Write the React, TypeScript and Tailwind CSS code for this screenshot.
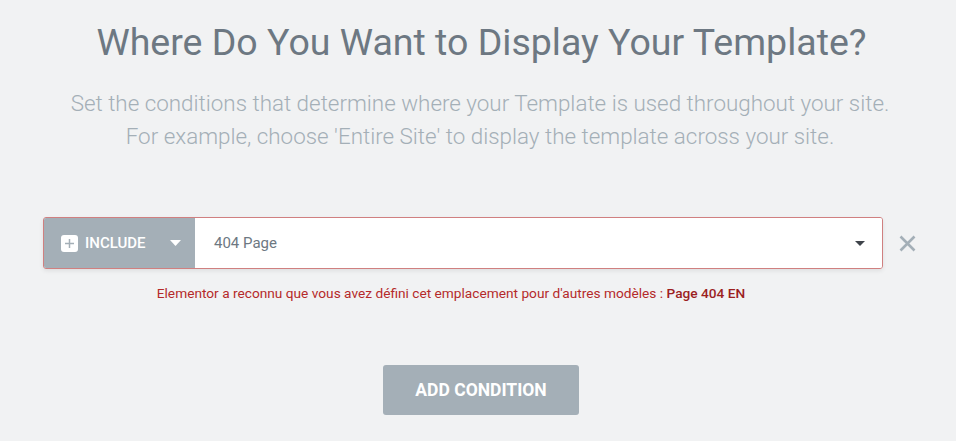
export default function App() {
  return (
    <div className="flex min-h-[441px] w-full flex-col items-center bg-[#f1f2f3] font-['Roboto',sans-serif]">
      <h1 className="ml-[7px] mt-[18px] text-[37.5px] font-normal leading-[48px] text-[#6d7882]">
        Where Do You Want to Display Your Template?
      </h1>
      <p className="ml-[4px] mt-[21px] text-center text-[22.4px] font-light leading-[33px] text-[#a4afb7]">
        Set the conditions that determine where your Template is used throughout your site.
        <br />
        For example, choose 'Entire Site' to display the template across your site.
      </p>

      <div className="mt-[64px] flex w-full items-center pl-[43px] pr-[40px]">
        <div className="flex h-[52px] flex-1 overflow-hidden rounded-[3px] border border-[#d08080] shadow-[0_2px_4px_rgba(0,0,0,0.08)]">
          <div className="flex w-[151px] items-center bg-[#a4afb7] pl-[17px] pr-[14px]">
            <span className="flex h-[17px] w-[17px] items-center justify-center rounded-[3px] bg-white">
              <svg width="11" height="11" viewBox="0 0 11 11">
                <path d="M5.5 1v9M1 5.5h9" stroke="#a4afb7" strokeWidth="1.5" />
              </svg>
            </span>
            <span className="ml-[7px] text-[15px] font-medium text-white">INCLUDE</span>
            <svg className="ml-auto" width="11" height="6" viewBox="0 0 11 6">
              <path d="M0 0h11L5.5 6z" fill="#fff" />
            </svg>
          </div>
          <div className="flex flex-1 items-center bg-white pl-[19px] pr-[17px]">
            <span className="text-[15px] text-[#6d7882]">404 Page</span>
            <svg className="ml-auto" width="10" height="5" viewBox="0 0 10 5">
              <path d="M0 0h10L5 5z" fill="#3f444b" />
            </svg>
          </div>
        </div>
        <svg className="ml-[16px]" width="17" height="17" viewBox="0 0 17 17">
          <path d="M1.5 1.5l14 14M15.5 1.5l-14 14" stroke="#a4afb7" strokeWidth="2.6" />
        </svg>
      </div>

      <p className="mt-[16px] w-full pr-[54px] text-center text-[13.7px] leading-[16px] text-[#b52a2a]">
        Elementor a reconnu que vous avez défini cet emplacement pour d'autres modèles :{' '}
        <span className="font-medium text-[#9c1f1f]">Page 404 EN</span>
      </p>

      <button className="ml-[6px] mt-[64px] h-[50px] w-[196px] rounded-[3px] bg-[#a4afb7] text-[17.5px] font-bold text-white">
        ADD CONDITION
      </button>
    </div>
  );
}
